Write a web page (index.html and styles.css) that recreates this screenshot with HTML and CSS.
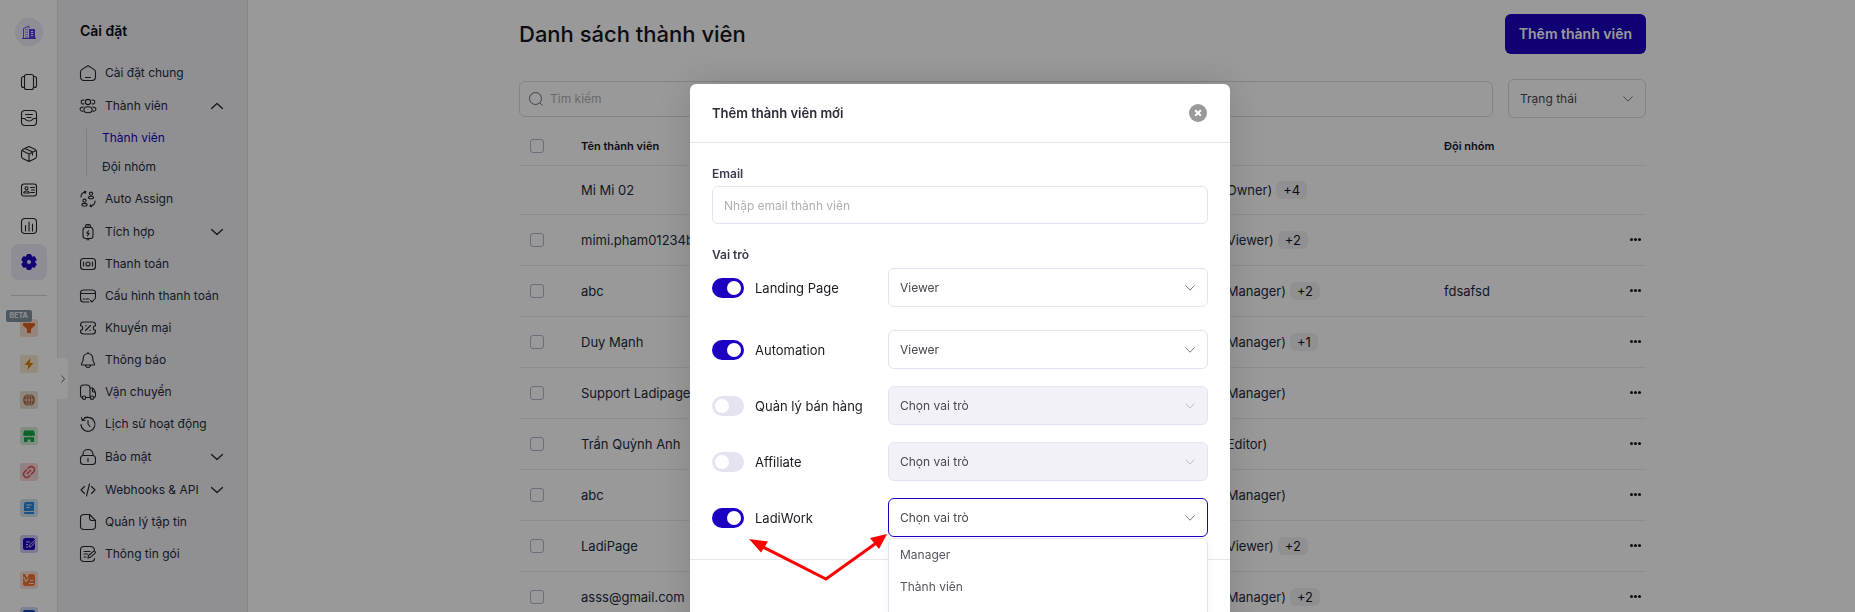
FILE: index.html
```html
<!DOCTYPE html>
<html lang="vi">
<head>
<meta charset="utf-8">
<title>Danh sách thành viên</title>
<link rel="stylesheet" href="styles.css">
</head>
<body>
<div class="app">
  <nav class="rail" aria-label="Ứng dụng">
    <a class="logo" href="#" aria-label="Trang chủ">
      <svg width="16" height="16" viewBox="0 0 16 16"><path d="M2.500 14V4.500L8 2v2" fill="none" stroke="#6a54e8" stroke-width="1"/><path d="M4 5.500l3-1V14H4z" fill="#a79af2"/><path d="M4 7h3M4 9.500h3M4 12h3" stroke="#f1effc"/><path d="M8 5h6v8.500h1V15H1v-1h7z" fill="#5a3fe0"/><path d="M10 7.500h2M10 9.500h2M10 11.500h2" stroke="#f1effc"/></svg>
    </a>
    <a class="rail-item" href="#" aria-label="Trang"><svg class="ico" viewBox="0 0 16 16"><rect x="3.500" y=".5" width="9" height="15" rx="2"/><path d="M3.500 2.500h-1a2 2 0 0 0-2 2v7a2 2 0 0 0 2 2h1M12.500 2.500h1a2 2 0 0 1 2 2v7a2 2 0 0 1-2 2h-1"/></svg></a>
    <a class="rail-item" href="#" aria-label="Hộp thư"><svg class="ico" viewBox="0 0 16 16"><rect x=".5" y=".5" width="15" height="15" rx="3.500"/><path d="M.5 8.500h2.500c1 0 1.300.6 1.800 1.300.5.8 1.200 1.200 3.200 1.200s2.700-.4 3.200-1.200c.5-.7.8-1.300 1.800-1.300h2.500M4.500 4.500h7M6 7.500h4"/></svg></a>
    <a class="rail-item" href="#" aria-label="Sản phẩm"><svg class="ico" viewBox="0 0 16 16"><path d="M8 .5l5.800 2.800c1.200.6 1.700 1.200 1.700 2.500v4.400c0 1.300-.5 1.900-1.700 2.500L8 15.500l-5.800-2.800C1 12.100.5 11.500.5 10.200V5.800c0-1.300.5-1.900 1.700-2.500zM1 4.500l7 3.500 7-3.500M8 8v7.500M4.200 2.400l7.300 3.700V9"/></svg></a>
    <a class="rail-item" href="#" aria-label="Khách hàng"><svg class="ico" viewBox="0 0 16 16"><rect x=".5" y="2" width="15" height="12" rx="2.500"/><circle cx="5.500" cy="6.300" r="1.500"/><path d="M2.800 11c0-1.300 1.200-2 2.700-2s2.700.7 2.700 2zM9.500 5.500h4M10.500 8h3M9.500 10.500h4"/></svg></a>
    <a class="rail-item" href="#" aria-label="Báo cáo"><svg class="ico" viewBox="0 0 16 16"><rect x=".5" y=".5" width="15" height="15" rx="3.500"/><path d="M4.500 7.500V13M8 4v9M11.500 6v7"/></svg></a>
    <a class="rail-item rail-active" href="#" aria-label="Cài đặt"><svg width="16" height="16" viewBox="0 0 16 16"><path fill="#1c00c2" fill-rule="evenodd" d="M6.200.6h3.600l.7 2 .9.500 2.100-.4 1.800 3.100L13.900 7.400v1.200l1.400 1.600-1.800 3.100-2.100-.4-.9.500-.7 2H6.200l-.7-2-.9-.5-2.100.4-1.800-3.100L2.100 8.600V7.400L.7 5.800l1.800-3.100 2.100.4.9-.5zM8 5.500a2.500 2.500 0 1 0 0 5 2.500 2.500 0 0 0 0-5z" stroke="#1c00c2" stroke-linejoin="round"/></svg></a>
    <hr class="rail-line">
    <a class="rail-item" href="#" aria-label="Funnel"><span class="tile t-orange"><svg viewBox="0 0 18 18"><path d="M4 4h10q1 0 1 1v1.500L11 10v4H7v-4L3 6.500V5q0-1 1-1z" fill="#e06220"/></svg></span><span class="beta">BETA</span></a>
    <a class="rail-item" href="#" aria-label="Automation"><span class="tile t-amber"><svg viewBox="0 0 18 18"><path d="M10.500 3L4.500 10h3.700L7.500 15l6-7H9.800z" fill="#d8850c"/></svg></span></a>
    <a class="rail-item" href="#" aria-label="Website"><span class="tile t-brown"><svg viewBox="0 0 18 18"><circle cx="9" cy="9" r="6" fill="#a8683c"/><path d="M9 3v12M3.500 9h11" stroke="#ecdfd3" stroke-width=".8"/><ellipse cx="9" cy="9" rx="3" ry="6" fill="none" stroke="#ecdfd3" stroke-width=".8"/></svg></span></a>
    <a class="rail-item" href="#" aria-label="Cửa hàng"><span class="tile t-green"><svg viewBox="0 0 18 18"><path d="M4 3.500h10l1 4.500q-1 1.800-2.500.6-1.500 1.200-3.500 0-2 1.200-3.500 0Q4 9.800 3 8zM4 10.200h10V15h-3.500v-2.500h-3V15H4z" fill="#17a344"/></svg></span></a>
    <a class="rail-item" href="#" aria-label="Affiliate"><span class="tile t-red"><svg viewBox="0 0 18 18" fill="none" stroke="#d84a50" stroke-width="1.300" stroke-linecap="round"><path d="M8 5.500l1.200-1.200a3.200 3.200 0 0 1 4.500 4.500L11.500 11M10 12.500l-1.200 1.200a3.200 3.200 0 0 1-4.500-4.500L6.500 7M7.300 10.700l3.400-3.400"/></svg></span></a>
    <a class="rail-item" href="#" aria-label="Khóa học"><span class="tile t-blue"><svg viewBox="0 0 18 18"><path d="M6 3h8v9H4V5q0-2 2-2zM4 13h10v2H5q-1 0-1-2z" fill="#2e86de"/><path d="M6.500 6h5M6.500 8.500h3" stroke="#e0effc"/></svg></span></a>
    <a class="rail-item" href="#" aria-label="LadiWork"><span class="tile t-violet"><svg viewBox="0 0 18 18"><rect x="3" y="3" width="12" height="12" rx="2.500" fill="#1c00c2"/><path d="M6 7h4M6 9.500h2M9 12l.5-2 5-4.500 1.200 1.200-4.700 5zM6 12h2" fill="none" stroke="#cfc9f3"/></svg></span></a>
    <a class="rail-item" href="#" aria-label="Biểu mẫu"><span class="tile t-peach"><svg viewBox="0 0 18 18"><path d="M3 3h2l2 4 2-4h4q2 0 2 2v8q0 2-2 2H5q-2 0-2-2z" fill="#f47432"/><path d="M3.500 6l2.500 4.500L8.500 7M10 9.500h3M9 12.500h5" fill="none" stroke="#fbe3d6" stroke-width="1.200"/></svg></span></a>
    <a class="rail-item" href="#" aria-label="Khác"><span class="tile t-navy"><svg viewBox="0 0 18 18"><rect x="3" y="3" width="12" height="12" rx="2" fill="#1b45b4"/></svg></span></a>
    <button class="collapse" type="button" aria-label="Thu gọn"><svg width="6" height="8" viewBox="0 0 6 8"><path d="M1.500 .5L4.500 4l-3 3.500" fill="none" stroke="#6b6b75"/></svg></button>
  </nav>

  <aside class="side">
    <h2 class="side-title">Cài đặt</h2>
    <ul class="menu">
      <li><a class="item" href="#"><svg class="ico" viewBox="0 0 16 16"><path d="M8 .8l5.600 3.300c1.300.8 1.900 1.500 1.900 3v4.700c0 2.200-1.200 3.700-3.500 3.700H4c-2.300 0-3.500-1.500-3.500-3.700V7.100c0-1.500.6-2.200 1.900-3zM5.500 12.500h5"/></svg>Cài đặt chung</a></li>
      <li>
        <a class="item parent" href="#"><svg class="ico" viewBox="0 0 16 16"><circle cx="8" cy="4" r="2.600"/><ellipse cx="8" cy="11.700" rx="4.200" ry="3"/><path d="M4 2.200a2 2 0 1 0 0 3.600M12 2.200a2 2 0 1 1 0 3.600M3.300 9C1.300 9-.2 10 .1 11.500c.2 1 1.300 1.700 2.600 1.900M12.700 9c2 0 3.500 1 3.200 2.500-.2 1-1.300 1.700-2.600 1.900"/></svg>Thành viên<svg class="chev" viewBox="0 0 12 12"><path d="M.5 8.500L6 3.500l5.500 5"/></svg></a>
        <ul class="sub">
          <li><a class="sub-item sub-active" href="#">Thành viên</a></li>
          <li><a class="sub-item" href="#">Đội nhóm</a></li>
        </ul>
      </li>
      <li><a class="item" href="#"><svg class="ico" viewBox="0 0 16 16"><path d="M1 6c0-2.600 1.800-4.700 4.500-5.300M15 10c0 2.600-1.800 4.700-4.500 5.300M4.500.2l1.500.6-.8 1.500M11.500 15.800l-1.500-.6.8-1.500"/><circle cx="11" cy="2.700" r="1.600"/><ellipse cx="11" cy="6.500" rx="2.600" ry="1.200"/><circle cx="4.500" cy="9.700" r="1.600"/><ellipse cx="4.500" cy="13.800" rx="2.600" ry="1.400"/></svg>Auto Assign</a></li>
      <li><a class="item parent" href="#"><svg class="ico" viewBox="0 0 16 16"><path d="M5.500 3.500V2c0-1 .5-1.500 1.500-1.500h2c1 0 1.500.5 1.500 1.500v1.500zM7 2h2M5.500 3.500h5q2.500 0 2.500 2.500v6q0 2.500-2.500 2.500h-5Q3 14.500 3 12V6q0-2.500 2.500-2.500zM7 15.800h2"/><path d="M8.500 6.800L6.800 9.300h2.400L7.500 11.800"/></svg>Tích hợp<svg class="chev" viewBox="0 0 12 12"><path d="M.5 3.500L6 8.500l5.500-5"/></svg></a></li>
      <li><a class="item" href="#"><svg class="ico" viewBox="0 0 16 16"><rect x=".5" y="2.500" width="15" height="11" rx="3"/><circle cx="8" cy="8" r="2"/><path d="M3.500 6v4M12.500 6v4"/></svg>Thanh toán</a></li>
      <li><a class="item" href="#"><svg class="ico" viewBox="0 0 16 16"><path d="M15.500 9V5q0-3-3-3h-9q-3 0-3 3v6q0 3 3 3H9M.5 5.500h15M3 11h1.500M6 11h3M10.500 12.500l1.500 1.500 3.500-4"/></svg>Cấu hình thanh toán</a></li>
      <li><a class="item" href="#"><svg class="ico" viewBox="0 0 16 16"><path d="M3.500 2h9q3 0 3 3v.8a2.200 2.200 0 0 0 0 4.400V11q0 3-3 3h-9q-3 0-3-3v-.8a2.200 2.200 0 0 0 0-4.400V5q0-3 3-3zM5.500 10.500l5-5M5.700 5.700h.6M9.800 10.300h.6"/></svg>Khuyến mại</a></li>
      <li><a class="item" href="#"><svg class="ico" viewBox="0 0 16 16"><path d="M8 1.500c-2.800 0-4.700 2-4.700 4.800 0 3.200-.8 4-1.600 5-.6.9-.3 1.700.8 1.700h11c1.100 0 1.400-.8.8-1.700-.8-1-1.600-1.800-1.600-5 0-2.800-1.900-4.800-4.700-4.800zM8 .2v1.300M5.500 13.200c.4 3 4.600 3 5 0"/></svg>Thông báo</a></li>
      <li><a class="item" href="#"><svg class="ico" viewBox="0 0 16 16"><path d="M2.200 13.500Q.5 13.500.5 11V4q0-3 3-3H7q3 0 3 3v9.500H5.800M10 4h2q1 0 1.600 1l1.400 2.500q.5.800.5 2V11q0 2.500-1.300 2.500M12.500 4v3q0 1 1 1h2"/><circle cx="4" cy="13.700" r="1.700"/><circle cx="12" cy="13.700" r="1.700"/></svg>Vận chuyển</a></li>
      <li><a class="item" href="#"><svg class="ico" viewBox="0 0 16 16"><path d="M2.500 4A7 7 0 1 1 1 8.500M4.500 1.800A7 7 0 0 1 8 1M1.500 1.500l.7 3 2.800-.2M8 4.500V8l2 2.500"/></svg>Lịch sử hoạt động</a></li>
      <li><a class="item parent" href="#"><svg class="ico" viewBox="0 0 16 16"><path d="M3 6.500V5.200C3 2.500 5 .5 8 .5s5 2 5 4.700v1.300"/><rect x=".5" y="6.500" width="15" height="9" rx="3"/><path d="M8 9.500v3"/></svg>Bảo mật<svg class="chev" viewBox="0 0 12 12"><path d="M.5 3.500L6 8.500l5.500-5"/></svg></a></li>
      <li><a class="item parent" href="#"><svg class="ico" viewBox="0 0 16 16"><path d="M4.500 4.500L1 8l3.500 3.500M11.500 4.500L15 8l-3.500 3.500M9.500 2l-3 12"/></svg>Webhooks &amp; API<svg class="chev" viewBox="0 0 12 12"><path d="M.5 3.500L6 8.500l5.500-5"/></svg></a></li>
      <li><a class="item" href="#"><svg class="ico" viewBox="0 0 16 16"><path d="M9.500.5H4Q.5.500.5 4v8q0 3.500 3.500 3.500h8q3.500 0 3.500-3.500V6.500zV4q0 2.500 2.500 2.500h3.500"/></svg>Quản lý tập tin</a></li>
      <li><a class="item" href="#"><svg class="ico" viewBox="0 0 16 16"><path d="M14.500 4Q14 .5 10.500.5H4Q.5.500.5 4v8q0 3.500 3.500 3.500h7q3.500 0 3.500-3M4 5.500h6M4 8h3.500M4 11h2M8 12l.4-2.500 5-4.200q1-.6 1.700.2t0 1.700L10.300 11.300z"/></svg>Thông tin gói</a></li>
    </ul>
  </aside>

  <main class="main">
    <div class="content">
      <header class="head">
        <h1 class="title">Danh sách thành viên</h1>
        <button class="primary" type="button">Thêm thành viên</button>
      </header>
      <div class="filters">
        <div class="search">
          <svg class="search-ico" viewBox="0 0 14 14"><circle cx="6.500" cy="6.500" r="6"/><path d="M11 11l2.500 2.500"/></svg>
          <input class="search-input" type="text" placeholder="Tìm kiếm" aria-label="Tìm kiếm">
        </div>
        <div class="pick pick-status">
          <select class="select" aria-label="Trạng thái"><option>Trạng thái</option></select>
          <svg class="caret" viewBox="0 0 10 6"><path d="M.5.500L5 5.200 9.500.500"/></svg>
        </div>
      </div>
      <table class="table">
        <thead>
          <tr><th class="c-check"><input class="box" type="checkbox" aria-label="Chọn tất cả"></th><th class="c-name">Tên thành viên</th><th class="c-role"></th><th class="c-team">Đội nhóm</th><th class="c-more"></th></tr>
        </thead>
        <tbody>
          <tr class="owner"><td></td><td>Mi Mi 02</td><td>(Owner)<span class="tag">+4</span></td><td></td><td></td></tr>
          <tr><td><input class="box" type="checkbox" aria-label="Chọn mimi"></td><td>mimi.pham01234b</td><td>(Viewer)<span class="tag">+2</span></td><td></td><td><button class="more" type="button" aria-label="Thao tác"></button></td></tr>
          <tr><td><input class="box" type="checkbox" aria-label="Chọn abc"></td><td>abc</td><td>(Manager)<span class="tag">+2</span></td><td>fdsafsd</td><td><button class="more" type="button" aria-label="Thao tác"></button></td></tr>
          <tr><td><input class="box" type="checkbox" aria-label="Chọn Duy Mạnh"></td><td>Duy Mạnh</td><td>(Manager)<span class="tag">+1</span></td><td></td><td><button class="more" type="button" aria-label="Thao tác"></button></td></tr>
          <tr><td><input class="box" type="checkbox" aria-label="Chọn Support Ladipage"></td><td>Support Ladipage</td><td>(Manager)</td><td></td><td><button class="more" type="button" aria-label="Thao tác"></button></td></tr>
          <tr><td><input class="box" type="checkbox" aria-label="Chọn Trần Quỳnh Anh"></td><td>Trần Quỳnh Anh</td><td>(Editor)</td><td></td><td><button class="more" type="button" aria-label="Thao tác"></button></td></tr>
          <tr><td><input class="box" type="checkbox" aria-label="Chọn abc"></td><td>abc</td><td>(Manager)</td><td></td><td><button class="more" type="button" aria-label="Thao tác"></button></td></tr>
          <tr><td><input class="box" type="checkbox" aria-label="Chọn LadiPage"></td><td>LadiPage</td><td>(Viewer)<span class="tag">+2</span></td><td></td><td><button class="more" type="button" aria-label="Thao tác"></button></td></tr>
          <tr><td><input class="box" type="checkbox" aria-label="Chọn asss@gmail.com"></td><td>asss@gmail.com</td><td>(Manager)<span class="tag">+2</span></td><td></td><td><button class="more" type="button" aria-label="Thao tác"></button></td></tr>
        </tbody>
      </table>
    </div>
  </main>
</div>

<div class="overlay">
  <section class="modal" role="dialog" aria-modal="true" aria-labelledby="dlg-title">
    <header class="modal-head">
      <h2 class="modal-title" id="dlg-title">Thêm thành viên mới</h2>
      <button class="close" type="button" aria-label="Đóng"><svg width="8" height="8" viewBox="0 0 8 8"><path d="M1.200 1.200l5.600 5.600M6.800 1.200L1.200 6.800" stroke="#fff" stroke-width="2"/></svg></button>
    </header>
    <div class="modal-body">
      <label class="label" for="email">Email</label>
      <input class="email" id="email" type="email" placeholder="Nhập email thành viên">
      <h3 class="label label-roles">Vai trò</h3>
      <div class="roles">
        <div class="role role-first">
          <input class="toggle" id="r1" type="checkbox" checked><label class="role-name" for="r1">Landing Page</label>
          <div class="pick"><select class="select" aria-label="Vai trò Landing Page"><option>Viewer</option></select><svg class="caret" viewBox="0 0 10 6"><path d="M.5.500L5 5.200 9.500.500"/></svg></div>
        </div>
        <div class="role">
          <input class="toggle" id="r2" type="checkbox" checked><label class="role-name" for="r2">Automation</label>
          <div class="pick"><select class="select" aria-label="Vai trò Automation"><option>Viewer</option></select><svg class="caret" viewBox="0 0 10 6"><path d="M.5.500L5 5.200 9.500.500"/></svg></div>
        </div>
        <div class="role">
          <input class="toggle" id="r3" type="checkbox"><label class="role-name" for="r3">Quản lý bán hàng</label>
          <div class="pick"><select class="select" disabled aria-label="Vai trò Quản lý bán hàng"><option>Chọn vai trò</option></select><svg class="caret" viewBox="0 0 10 6"><path d="M.5.500L5 5.200 9.500.500"/></svg></div>
        </div>
        <div class="role">
          <input class="toggle" id="r4" type="checkbox"><label class="role-name" for="r4">Affiliate</label>
          <div class="pick"><select class="select" disabled aria-label="Vai trò Affiliate"><option>Chọn vai trò</option></select><svg class="caret" viewBox="0 0 10 6"><path d="M.5.500L5 5.200 9.500.500"/></svg></div>
        </div>
        <div class="role">
          <input class="toggle" id="r5" type="checkbox" checked><label class="role-name" for="r5">LadiWork</label>
          <div class="pick">
            <select class="select select-open" aria-label="Vai trò LadiWork"><option>Chọn vai trò</option></select><svg class="caret" viewBox="0 0 10 6"><path d="M.5.500L5 5.200 9.500.500"/></svg>
            <ul class="options"><li class="option">Manager</li><li class="option">Thành viên</li></ul>
          </div>
          <svg class="arrows" width="140" height="50" viewBox="0 0 140 50"><path d="M11 10L78 44l51-36.500" fill="none" stroke="#f00" stroke-width="3"/><path d="M1 4l19 2.500-7 11zM139-1l-8 15-9-11z" fill="#f00"/></svg>
        </div>
      </div>
    </div>
    <footer class="modal-foot"></footer>
  </section>
</div>
</body>
</html>
```
FILE: styles.css
```css
* { box-sizing: border-box; }
body {
  margin: 0;
  height: 100vh;
  overflow: hidden;
  background: #fff;
  font-family: Inter, "Liberation Sans", sans-serif;
  font-size: 13px;
  line-height: 18px;
  color: #1e2a3b;
}
h1, h2, h3, ul { margin: 0; padding: 0; }
ul { list-style: none; }
a { color: inherit; text-decoration: none; }
button, input, select { margin: 0; font: inherit; color: inherit; }
.app { display: flex; height: 100%; overflow: hidden; }
.ico {
  width: 16px; height: 16px; flex: none; overflow: visible;
  fill: none; stroke: #23232f; stroke-width: 1.1;
  stroke-linecap: round; stroke-linejoin: round;
}

/* App rail */
.rail {
  position: relative; flex: none; width: 58px; padding-top: 18px;
  display: flex; flex-direction: column; align-items: center;
  border-right: 1px solid #e3e3ea;
}
.logo {
  flex: none; width: 28px; height: 28px; margin-bottom: 18px; border-radius: 50%;
  display: grid; place-items: center; background: #eeebfa;
}
.rail-item { position: relative; flex: none; width: 36px; height: 36px; display: grid; place-items: center; }
.rail-active { border-radius: 8px; background: #edeaf8; }
.rail-line { flex: none; width: 36px; height: 1px; margin: 15px 0 14px; border: 0; background: #d4d4de; }
.tile { display: block; width: 18px; height: 18px; border-radius: 3px; }
.tile svg { display: block; width: 18px; height: 18px; }
.t-orange { background: #f8dccd; }
.t-amber { background: #f6e8cf; }
.t-brown { background: #ecdfd3; }
.t-green { background: #d0ecd8; }
.t-red { background: #f6d5d7; }
.t-blue { background: #cfe4f6; }
.t-violet { background: #cfc9f3; }
.t-peach { background: #fbe3d6; }
.t-navy { background: #cfd8f0; }
.beta {
  position: absolute; left: -5px; top: 0; padding: 0 4px; border-radius: 2px;
  background: #84919f; color: #eef1f4; font-size: 7px; font-weight: 700; line-height: 12px;
}
.collapse {
  position: absolute; left: 57px; top: 358px; width: 11px; height: 41px; padding: 0;
  display: grid; place-items: center; border: 0; border-radius: 0 5px 5px 0; background: #fff;
}

/* Settings menu */
.side { flex: none; width: 190px; padding: 22px 16px 0 22px; background: #f1f1f5; border-right: 1px solid #dcdce4; font-size: 12px; }
.side-title { margin-bottom: 17px; font-size: 14px; font-weight: 600; color: #0c0c14; }
.item { display: flex; align-items: center; gap: 9px; height: 32px; white-space: nowrap; }
.parent { height: 33px; }
.chev { flex: none; width: 12px; height: 12px; margin: 0 8px 0 auto; fill: none; stroke: #23232f; stroke-width: 1.3; stroke-linecap: round; stroke-linejoin: round; }
.sub { margin: 7px 0 7px 6px; padding-left: 15px; border-left: 1px solid #d3d3db; }
.sub-item { display: block; line-height: 18px; }
.sub li + li { margin-top: 11px; }
.sub-active { color: #1c00c2; }

/* Member list */
.main { flex: 1; min-width: 0; display: grid; grid-template-columns: minmax(16px, 271fr) minmax(0, 1127fr) minmax(16px, 209fr); }
.content { grid-column: 2; padding-top: 14px; }
.head { display: flex; align-items: center; justify-content: space-between; }
.title { font-size: 22px; font-weight: 500; line-height: 28px; color: #14141e; }
.primary { height: 40px; padding: 0 14px; border: 0; border-radius: 6px; background: #1c00c2; color: #fff; font-size: 14px; font-weight: 600; }
.filters { display: flex; align-items: center; gap: 15px; margin-top: 25px; }
.search { flex: 1; height: 36px; padding: 0 9px; display: flex; align-items: center; gap: 7px; border: 1px solid #dadae8; border-radius: 6px; }
.search-ico { width: 14px; height: 14px; flex: none; fill: none; stroke: #6c6c80; }
.search-input { flex: 1; min-width: 0; padding: 0; border: 0; outline: 0; background: none; font-size: 12px; }
.search-input::placeholder, .email::placeholder { color: #b0b0b4; opacity: 1; }
.pick { position: relative; flex: none; width: 320px; }
.pick-status { width: 138px; }
.select {
  display: block; width: 100%; height: 39px; padding: 0 32px 0 11px; appearance: none;
  border: 1px solid #e4e4f0; border-radius: 6px; background: #fff; color: #47474f; font-size: 12px; opacity: 1;
}
.pick-status .select { border-color: #dadae4; }
.caret { position: absolute; right: 13px; top: 17px; width: 10px; height: 6px; fill: none; stroke: #77777f; pointer-events: none; }
.table { width: 100%; margin-top: 9px; border-collapse: collapse; table-layout: fixed; }
.table th { height: 38px; padding: 0; text-align: left; font-size: 11px; font-weight: 600; color: #14141e; border-bottom: 1px solid #ebebf0; }
.table td { height: 51px; padding: 0; border-bottom: 1px solid #ebebf0; }
.table .owner td { height: 49px; }
.table th:first-child, .table td:first-child { padding-left: 11px; }
.c-check { width: 62px; }
.c-team { width: 186px; }
.c-role { width: 222px; }
.c-more { width: 16px; }
.box { display: block; width: 14px; height: 14px; appearance: none; border: 1px solid #b4b4cc; border-radius: 3px; }
.tag { display: inline-block; margin-left: 4px; padding: 0 7px; border-radius: 6px; background: #f1f1f6; color: #14141e; }
.more { display: block; width: 3px; height: 3px; padding: 0; border: 0; border-radius: 50%; background: #14141e; box-shadow: 4px 0 #14141e, 8px 0 #14141e; }

/* Dialog */
.overlay { position: fixed; inset: 0; padding: 84px 0 0 65px; display: flex; justify-content: center; align-items: flex-start; background: rgba(0, 0, 0, .4); }
.modal { width: 540px; border-radius: 6px; background: #fff; box-shadow: 0 0 40px rgba(0, 0, 0, .15); }
.modal-head { display: flex; align-items: center; justify-content: space-between; padding: 20px 23px 20px 22px; border-bottom: 1px solid #e6e6ec; }
.modal-title { font-size: 13px; font-weight: 600; color: #2b2b38; }
.close { width: 18px; height: 18px; padding: 0; border: 0; border-radius: 50%; display: grid; place-items: center; background: #999; }
.modal-body { padding: 22px; }
.label { display: block; font-size: 12px; font-weight: 600; line-height: 18px; color: #3c3c4a; }
.email { display: block; width: 100%; height: 38px; margin-top: 3px; padding: 0 11px; border: 1px solid #e4e4f0; border-radius: 6px; font-size: 12px; }
.label-roles { margin: 22px 0 4px; }
.roles { display: flex; flex-direction: column; gap: 17px; }
.role { position: relative; display: flex; align-items: center; }
.role-first { margin-bottom: 6px; }
.role-name { flex: 1; padding-left: 11px; color: #1b1b22; }
.toggle { width: 32px; height: 20px; padding: 3px; appearance: none; display: flex; border-radius: 10px; background: #e4e4f0; }
.toggle::before { content: ""; width: 14px; height: 14px; border-radius: 50%; background: #fff; }
.toggle:checked { justify-content: flex-end; background: #1c00c2; }
.select:disabled { background: #f2f1f7; }
.select:disabled + .caret { stroke: #bdbdc6; }
.select-open { border-color: #1c00c2; }
.options { position: absolute; left: 0; right: 0; top: 40px; height: 120px; border: 1px solid #e4e4f0; border-radius: 6px; background: #fff; box-shadow: 0 2px 8px rgba(0, 0, 0, .06); }
.option { padding: 7px 11px; font-size: 12px; color: #555560; }
.arrows { position: absolute; left: 36px; top: 37px; overflow: visible; }
.modal-foot { height: 80px; border-top: 1px solid #e6e6ec; }
```
